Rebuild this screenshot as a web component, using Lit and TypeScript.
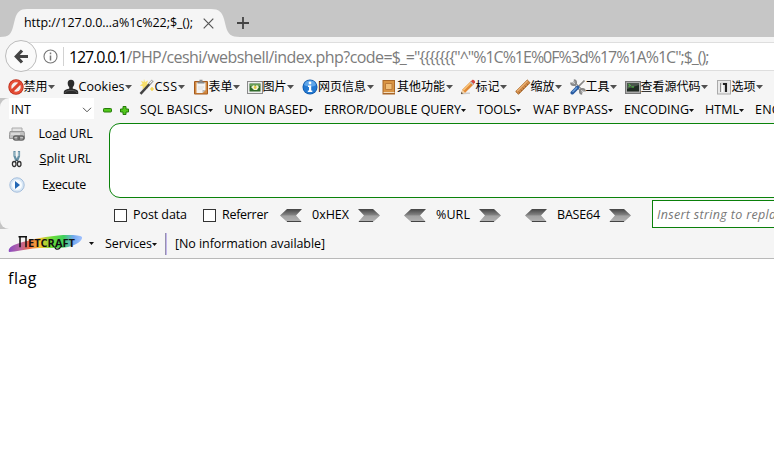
import { LitElement, html, svg, css } from "lit";
import { customElement, property } from "lit/decorators.js";

/* A one-line label whose tracking adapts to the width it is given. */
@customElement("fit-label")
class FitLabel extends LitElement {
  @property({ type: Number }) w = 0;
  static styles = css`
    :host { display: inline-block; white-space: pre; flex: none; }
    .t { display: inline-block; white-space: pre; }
  `;
  firstUpdated() {
    const t = this.renderRoot.querySelector(".t") as HTMLElement;
    const n = (this.textContent || "").length;
    const natural = t.getBoundingClientRect().width;
    this.style.width = this.w + "px";
    if (n) t.style.letterSpacing = (this.w - natural) / n + "px";
  }
  render() {
    return html`<span class="t"><slot></slot></span>`;
  }
}

const icons: Record<string, unknown> = {
  ban: svg`<circle cx="8" cy="8" r="7.7" fill="#b92a17"/><circle cx="8" cy="8" r="6.9" fill="#e8523a"/><circle cx="8" cy="8" r="4.7" fill="#f3f1f0"/><path d="M3.6 12.4L12.4 3.6" stroke="#dc432c" stroke-width="3"/>`,
  user: svg`<path d="M8 .8c2.200 0 3.500 1.500 3.300 3.800-.1 1.700-.8 2.800-1.500 3.500v1.600c2.500.4 5.200 1.100 5.400 3.100V15H.8v-2.200c.2-2 2.900-2.700 5.400-3.100V8.100C5.500 7.400 4.800 6.300 4.700 4.600 4.500 2.300 5.800.8 8 .8z" fill="#2b2b2b"/><path d="M2 14c.4-1.700 2-2 4-2.500h4c2 .5 3.600.8 4 2.500" stroke="#555" fill="none"/>`,
  wand: svg`<path d="M5 0l1 3 3-1.500L8 4.500l3 1.200-3 1 .8 3L6 8.200 3.500 10.500 3.800 7.300.8 6.500l2.700-1.800L2 1.800 4.600 3z" fill="#f8e06c"/><path d="M1.500 14.800L11.500 4" stroke="#444" stroke-width="2.500"/><path d="M10.300 5.200L13.800 1.400" stroke="#aaa" stroke-width="2.800"/><path d="M10.500 4.600l2.700-2.900" stroke="#f4f4f4"/><path d="M13 8v4M11 10h4" stroke="#f3cf33" stroke-width="1.200"/>`,
  clip: svg`<rect x="1" y="2" width="14" height="13.500" rx="1" fill="#a65a1c"/><rect x="2" y="3" width="12" height="11.500" fill="#d28a42"/><path d="M3.500 3.500h9v7.500l-3 3h-6z" fill="#f3f3f3"/><path d="M12.500 11h-3v3z" fill="#b8b8b8"/><path d="M4.500 4.500V2.800h2V.8h3v2h2v1.700z" fill="#888"/><path d="M5 8h6M5 10h5" stroke="#ddd"/>`,
  photo: svg`<rect x=".5" y="2.500" width="15" height="12" fill="#eee" stroke="#8a8a8a"/><rect x="2.500" y="4.500" width="11" height="8" fill="#2f6a28"/><path d="M3 5h10v2H3z" fill="#6a9e55"/><path d="M4 8l3-2 1 1.500L10 6l2 2-2 3H7z" fill="#f1f4d8"/><circle cx="8.200" cy="8.500" r="1.400" fill="#e4c63c"/>`,
  info: svg`<circle cx="8" cy="8" r="7.500" fill="#1259a8"/><circle cx="8" cy="8" r="6.700" fill="#2379d2"/><path d="M2 6a6.300 6.300 0 0 1 12 0c-3 2-8 2-12 0z" fill="#5fa6ea"/><circle cx="8" cy="4" r="1.400" fill="#fff"/><path d="M6 6.500h3.200v5h1.100V13H5.800v-1.500H7V8H6z" fill="#fff"/>`,
  book: svg`<path d="M1.500 1h12.500v14.500H1.500z" fill="#a86628"/><path d="M2.500 2h10.500v11H2.500z" fill="#d99443"/><path d="M4.500 4.500h6.500v6H4.500z" fill="#f0bd77" stroke="#bd7a38"/><path d="M2.500 13.500h11" stroke="#f1dcbd"/>`,
  pencil: svg`<path d="M1 14.800c3-.8 6-.5 9-.6" stroke="#ccc" fill="none" stroke-width="1.500"/><path d="M1 15l1.200-4.200L11 2l3 3-8.800 8.800z" fill="#e28a35"/><path d="M3.300 11.300L11.500 3" stroke="#f8c77e" stroke-width="1.400"/><path d="M1 15l1.200-4.200 3 3z" fill="#f0d4ac"/><path d="M1 15l.6-1.900 1.300 1.300z" fill="#333"/><path d="M10.600 2.500L12.500.8c1-.6 3.100 1.400 2.500 2.600l-1.800 1.900z" fill="#d5473e"/><path d="M9.900 3.200l1-1 2.800 2.900-1 1z" fill="#b8bec7"/>`,
  ruler: svg`<path d="M.7 12.500L12.300 1l2.700 2.700L3.500 15.300z" fill="#d08a48" stroke="#a56527" stroke-width=".9"/><path d="M2 12.200L12.500 1.900" stroke="#edb477" stroke-width="1.200"/><path d="M5 14l-1.300-1.300M7 12l-1.300-1.300M9 10L7.700 8.700M11 8L9.700 6.700M13 6l-1.300-1.300" stroke="#8f5121" stroke-width=".7"/>`,
  tools: svg`<path d="M3 3l10 10" stroke="#777" stroke-width="3"/><path d="M3 3l10 10" stroke="#d4d4d4" stroke-width="1.400"/><path d="M1 3.500A2.600 2.600 0 1 0 3.800 1M15 12.500a2.600 2.600 0 1 0-2.800 2.500" fill="none" stroke="#888" stroke-width="1.700"/><path d="M14.500 1.500L7.500 8.500" stroke="#888" stroke-width="1.700"/><path d="M7.500 8.500L2.300 13.700" stroke="#285aa0" stroke-width="3.600" stroke-linecap="round"/><path d="M7 8.500L2.500 13" stroke="#6ca0dc" stroke-width="1.200"/>`,
  term: svg`<rect x=".5" y="2.500" width="15" height="12" fill="#aaa" stroke="#777"/><rect x="2" y="4" width="12" height="8.500" fill="#202b23"/><path d="M2 4h12v2L2 10z" fill="#4b554d"/><path d="M3.500 5.200l2 1.200-2 1.300M6.500 8h2.500" fill="none" stroke="#53cf40"/>`,
  opts: svg`<rect x="1.500" y="1.500" width="13" height="13.500" fill="#e9e9e9" stroke="#aaa"/><rect x="4.500" y="3.500" width="7" height="9.500" fill="#d5d5d5"/><path d="M7 4h4v9H9V6H7z" fill="#222"/><path d="M5.500 6h2v7h-2z" fill="#fff"/><path d="M4.500 4v9" stroke="#888"/>`,
};

const devMenu: [string, string, number, number][] = [
  ["ban", "禁用", 24, 55], ["user", "Cookies", 46, 76], ["wand", "CSS", 23, 54],
  ["clip", "表单", 24, 54], ["photo", "图片", 24, 55.5], ["info", "网页信息", 48, 79],
  ["book", "其他功能", 48, 78.5], ["pencil", "标记", 24, 55], ["ruler", "缩放", 24, 55],
  ["tools", "工具", 24, 55], ["term", "查看源代码", 60, 91], ["opts", "选项", 24, 57],
];

const sqlMenu: [string, number, number][] = [
  ["SQL BASICS", 68, 84], ["UNION BASED", 84, 100], ["ERROR/DOUBLE QUERY", 137, 153],
  ["TOOLS", 39, 56], ["WAF BYPASS", 75, 91], ["ENCODING", 65, 81],
  ["HTML", 34, 50], ["ENCRYPTION", 78, 94],
];

@customElement("app-root")
class AppRoot extends LitElement {
  static styles = css`
    :host { display: block; width: 774px; height: 453px; overflow: hidden; background: #fff; color: #000;
      font: 12.5px/18px "Open Sans", "Noto Sans CJK SC", sans-serif; }
    * { box-sizing: border-box; }
    svg { display: block; flex: none; }
    .tabs { height: 37px; background: #c6c6c6; position: relative; display: flex; align-items: center; padding: 9px 0 0 24px; }
    .tabshape { position: absolute; left: 0; top: 9px; }
    .tabs > :not(.tabshape) { position: relative; }
    .close { margin-left: 10px; }
    .new { margin-left: 23px; }
    .nav { height: 38px; background: #f5f5f5; display: flex; align-items: center; padding-left: 5px; }
    .back { width: 32px; height: 32px; border-radius: 50%; border: 1px solid #bcbcbc; background: #fafafa; z-index: 1; display: grid; place-items: center; flex: none; }
    .url { flex: 1; height: 29px; margin-left: -16px; padding-left: 22px; background: #fff; border: solid #dedede; border-width: 1px 0; display: flex; align-items: center; font-size: 16px; line-height: 22px; color: #7c7c7c; }
    .sep { width: 1px; height: 19px; background: #d2d2d2; margin: 0 5px 0 5px; flex: none; }
    .url fit-label { margin-top: 1px; }
    .host { color: #000; }
    .dev { height: 23px; background: #f5f5f5; display: flex; padding-left: 7.500px; align-items: center; overflow: hidden; }
    .item { display: flex; align-items: center; flex: none; }
    .dev .item { font-size: 12px; line-height: 18px; }
    .dev .latin { font-size: 12.500px; }
    .tri { margin: 1px 0 0 .5px; }
    .hackwrap { background: #c4c4c4; height: 131px; }
    .hack { background: #f5f5f5; height: 131px; border-radius: 9px 0 0 9px; overflow: hidden; }
    .top { height: 22px; display: flex; align-items: center; padding-left: 9px; }
    .top .item { padding-top: 2px; }
    .select { width: 85px; height: 21px; background: #fff; align-self: flex-start; display: flex; align-items: center; padding: 2px 2px 0 2px; justify-content: space-between; flex: none; }
    .minus { margin: 2px 0 0 9px; }
    .plus { margin: 2px 11px 0 8px; }
    .caret { margin-top: 1px; }
    .mid { display: flex; height: 81px; }
    .cmds { width: 109px; padding: 1px 0 0 9px; flex: none; }
    .cmd { height: 25.500px; display: grid; grid-template-columns: 16px 84px; align-items: center; }
    .cmd div { text-align: center; padding-right: 3px; }
    .cmd fit-label { vertical-align: top; }
    .run div { padding-right: 6px; }
    u { text-underline-offset: 1px; text-decoration-thickness: 1px; }
    .area { flex: 1; height: 75px; margin: 3px -20px 0 0; border: 1px solid #0a830a; border-radius: 11px; background: #fff; }
    .opts { height: 28px; display: flex; align-items: center; padding-left: 114px; }
    .box { width: 13px; height: 13px; border: 1px solid #333; background: #fff; flex: none; margin-right: 6px; }
    .gapA { margin-right: 16px; }
    .gapB { margin-right: 12px; }
    .word { margin: -1px 9px 0 0; }
    .replace { width: 160px; height: 28px; border: 1px solid #0a800a; background: #fff; color: #777; font-style: italic; padding: 5px 4px; flex: none; margin: -2px 0 0 21px; }
    .net { height: 30px; background: #f5f5f5; border-bottom: 1px solid #b9b9b9; display: flex; align-items: center; padding-left: 8px; }
    .logo text { font: 700 10px "Open Sans", sans-serif; }
    .dot { margin: 0 11px 0 5px; }
    .vsep { width: 2px; height: 22px; background: linear-gradient(90deg, #9590ad 50%, #c3b6ec 50%); margin: 0 8px 0 8px; flex: none; }
    .page { padding: 8px; font-size: 16px; line-height: 23px; }
  `;

  caret(c = "caret") {
    return html`<svg class=${c} width="5" height="3" viewBox="0 0 5 3"><path d="M0 0h5L2.500 3z" fill="#111"/></svg>`;
  }
  arrow(right: boolean, gap: number) {
    const d = right ? "M0 0h15l7 6.500L15 13H0l6-6.500z" : "M22 0H7L0 6.500 7 13h15l-6-6.500z";
    const low = right ? "M6 6.500h15L15 12H2z" : "M16 6.500H1L7 12h13z";
    return html`<svg width="22" height="13" viewBox="0 0 22 13" style="margin-right:${gap}px">
      <defs><linearGradient id="g" x2="0" y2="1"><stop stop-color="#444"/><stop offset=".48" stop-color="#858585"/><stop offset=".52" stop-color="#999"/><stop offset="1" stop-color="#bdbdbd"/></linearGradient></defs>
      <path d=${d} fill="url(#g)"/><path d=${low} fill="#aaa" opacity=".5"/><path d=${right ? "M1 12.500h14" : "M7 12.500h14"} stroke="#444"/></svg>`;
  }

  render() {
    return html`
      <div class="tabs">
        <svg class="tabshape" width="240" height="28" viewBox="0 0 240 28"><path d="M0 28C9 28 11 25 13 18L15 10C17 3 20 0 27 0H211C219 0 222 3 224 10L226 18C228 25 231 28 240 28z" fill="#f5f5f5"/></svg>
        <fit-label w="169">http://127.0.0…a%1c%22;$_();</fit-label>
        <svg class="close" width="11" height="11" viewBox="0 0 11 11"><path d="M.7.700l9.600 9.600M10.300.7L.7 10.300" stroke="#555" stroke-width="1.200"/></svg>
        <svg class="new" width="12" height="12" viewBox="0 0 12 12"><path d="M6 0v12M0 6h12" stroke="#444" stroke-width="1.800"/></svg>
      </div>
      <div class="nav">
        <div class="back"><svg width="15" height="15" viewBox="0 0 15 15"><path d="M8 1.500L2.300 7.500 8 13.500M2.500 7.500H14" fill="none" stroke="#444" stroke-width="3.200"/></svg></div>
        <div class="url">
          <svg width="15" height="15" viewBox="0 0 15 15"><circle cx="7.500" cy="7.500" r="6.500" fill="none" stroke="#777" stroke-width="1.100"/><path d="M7.500 6.500v5M7.500 3.500v1.700" stroke="#777" stroke-width="1.500"/></svg>
          <span class="sep"></span>
          <fit-label class="host" w="57.5">127.0.0.1</fit-label><fit-label w="257">/PHP/ceshi/webshell/index.php?code</fit-label><fit-label w="325">=$_="{{{{{{{"^"%1C%1E%0F%3d%17%1A%1C";$_();</fit-label>
        </div>
      </div>
      <div class="dev">
        ${devMenu.map(([i, t, tw, w]) => html`<div class="item" style="width:${w}px">
          <svg width="16" height="16" viewBox="0 0 16 16">${icons[i]}</svg>
          <fit-label class=${/^[A-Z]/.test(t) ? "latin" : ""} w=${tw}>${t}</fit-label>
          <svg class="tri" width="7" height="4" viewBox="0 0 7 4"><path d="M0 0h7L3.500 4z" fill="#505050"/></svg>
        </div>`)}
      </div>
      <div class="hackwrap"><div class="hack">
        <div class="top">
          <div class="select"><fit-label w="20">INT</fit-label><svg width="10" height="6" viewBox="0 0 10 6"><path d="M1 .8l4 4 4-4" fill="none" stroke="#555"/></svg></div>
          <svg class="minus" width="9" height="5" viewBox="0 0 9 5"><rect x=".5" y=".5" width="8" height="3.500" rx=".8" fill="#52c81c" stroke="#267a0b"/></svg>
          <svg class="plus" width="9" height="9" viewBox="0 0 9 9"><path d="M3 .5h3V3h2.500v3H6v2.500H3V6H.5V3H3z" fill="#52c81c" stroke="#267a0b"/></svg>
          ${sqlMenu.map(([t, tw, w]) => html`<div class="item" style="width:${w}px"><fit-label w=${tw}>${t}</fit-label>${this.caret()}</div>`)}
        </div>
        <div class="mid">
          <div class="cmds">
            <div class="cmd"><svg width="16" height="16" viewBox="0 0 16 16"><path d="M3 2h10v4H3z" fill="#e4e4e4" stroke="#aaa"/><path d="M1 5.500h14l.5 3v4H.5v-4z" fill="#c2c2c2" stroke="#999"/><path d="M2 8h9" stroke="#f3f3f3"/><rect x="4.500" y="10" width="6" height="4" rx="2" fill="none" stroke="#666" stroke-width="1.400"/><rect x="9" y="10" width="6" height="4" rx="2" fill="none" stroke="#666" stroke-width="1.400"/></svg><div><fit-label w="54">Lo<u>a</u>d URL</fit-label></div></div>
            <div class="cmd"><svg width="16" height="18" viewBox="0 0 16 18"><path d="M5.500 1v5l2 5M10 1v5l-2 5" stroke="#6590a5" stroke-width="2.200" fill="none"/><path d="M6 2v4M9.800 2v4" stroke="#c8dde4" stroke-width=".8"/><ellipse cx="5.200" cy="14" rx="1.800" ry="2.500" fill="none" stroke="#333" stroke-width="1.300"/><ellipse cx="10.200" cy="14" rx="1.800" ry="2.500" fill="none" stroke="#333" stroke-width="1.300"/><path d="M6 11.700l1.700-1.500 1.800 1.500" stroke="#333" fill="none"/></svg><div><fit-label w="52"><u>S</u>plit URL</fit-label></div></div>
            <div class="cmd run"><svg width="16" height="16" viewBox="0 0 16 16"><circle cx="8" cy="8" r="7.200" fill="#d8e7f5" stroke="#a3bddb"/><circle cx="8" cy="8" r="5" fill="#f8fcff"/><path d="M6 4l5 4-5 4z" fill="#2267b5"/></svg><div><fit-label w="44">E<u>x</u>ecute</fit-label></div></div>
          </div>
          <div class="area"></div>
        </div>
        <div class="opts">
          <span class="box"></span><fit-label class="gapA" w="54">Post data</fit-label>
          <span class="box"></span><fit-label class="gapB" w="46">Referrer</fit-label>
          ${this.arrow(false, 10)}<fit-label class="word" w="37">0xHEX</fit-label>${this.arrow(true, 24)}
          ${this.arrow(false, 10)}<fit-label class="word" w="34">%URL</fit-label>${this.arrow(true, 24)}
          ${this.arrow(false, 10)}<fit-label class="word" w="43">BASE64</fit-label>${this.arrow(true, 0)}
          <div class="replace"><fit-label w="132">Insert string to replace</fit-label></div>
        </div>
      </div></div>
      <div class="net">
        <svg class="logo" width="76" height="22" viewBox="0 0 76 22">
          <defs><linearGradient id="rb"><stop stop-color="#8a4bc0"/><stop offset=".15" stop-color="#b765a5"/><stop offset=".28" stop-color="#ee6844"/><stop offset=".43" stop-color="#f4c531"/><stop offset=".58" stop-color="#70dc35"/><stop offset=".75" stop-color="#3fd05e"/><stop offset=".88" stop-color="#72a8ef"/><stop offset="1" stop-color="#a2c2ff"/></linearGradient></defs>
          <path d="M1 19C0 16 2 14 6 12 16 8 34 4 50 2.500 60 1.500 72 2 74 4c1 3-5 8-14 10-10 2-22 0-35 1.500C16 16.500 8 18.500 1 19z" fill="url(#rb)"/>
          <path d="M12 14.200V3.700h6v10.500M10.500 3.700h8.500" fill="none" stroke="#111" stroke-width="1.500"/>
          <text x="20" y="13.500" textLength="47" lengthAdjust="spacingAndGlyphs" fill="#111">ETCRAFT</text>
          <path d="M47 14c0 3 5 3 5.500-.5" fill="none" stroke="#111" stroke-width="1.200"/>
        </svg>
        ${this.caret("dot")}
        <fit-label w="47">Services</fit-label>${this.caret()}
        <span class="vsep"></span><fit-label w="150">[No information available]</fit-label>
      </div>
      <div class="page"><fit-label w="29">flag</fit-label></div>
    `;
  }
}
